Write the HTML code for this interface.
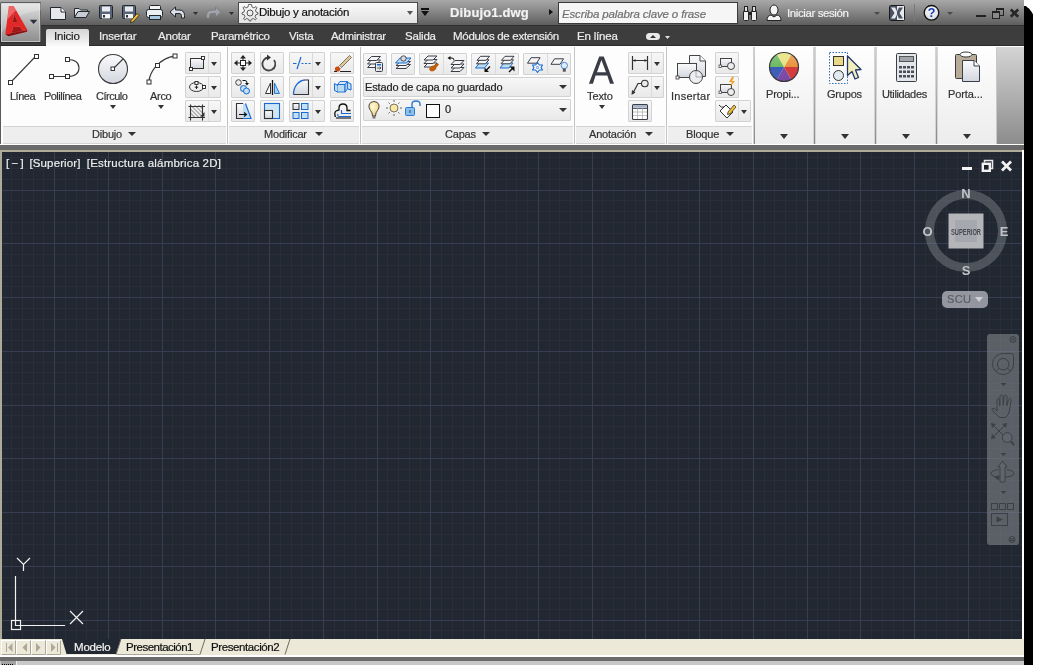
<!DOCTYPE html>
<html><head><meta charset="utf-8">
<style>
html,body{margin:0;padding:0}
body{will-change:transform}
body{width:1039px;height:665px;position:relative;overflow:hidden;background:#fff;font-family:"Liberation Sans",sans-serif;font-size:11px;color:#222}
.a{position:absolute}
.t{position:absolute;white-space:nowrap;line-height:1;-webkit-text-stroke:0.2px currentColor}
.btn{position:absolute;box-sizing:border-box;border:1px solid #d2d2d2;border-radius:1px;background:linear-gradient(#f7f7f7,#e9e9e9)}
.sp{position:absolute;top:0;bottom:0;width:1px;background:#d6d6d6}
.dd{position:absolute;width:0;height:0;border-left:3.5px solid transparent;border-right:3.5px solid transparent;border-top:4px solid #333}
.ptitle{position:absolute;top:126px;height:18px;box-sizing:border-box;border-top:1px solid #d4d4d4;border-bottom:1px solid #d4d4d4;background:#eeeeee}
.ptitle .t{top:2px;font-size:11px;color:#333}
.ptitle .dd{border-left-width:4px;border-right-width:4px;border-top-width:4.5px;top:5px !important}
.vsep{position:absolute;top:47px;height:97px;width:1px;background:#c4c4c4}
.bigp{position:absolute;top:47px;height:97px;box-sizing:border-box;background:linear-gradient(#fefefe,#ececec)}
</style></head><body>

<!-- right shadow -->
<svg class="a" style="left:1024px;top:6px" width="9" height="659"><path d="M0 0 H2 L3.5 1.6 L5 2.6 L6.5 4.4 L8 6.4 L9 8.4 V659 H0 Z" fill="#000"/></svg>

<!-- title bar -->
<div class="a" style="left:0;top:0;width:1024px;height:25px;background:linear-gradient(#a8a8a8,#9a9a9a 20%,#5e5e5e)"></div>
<div class="a" style="left:0;top:25px;width:1024px;height:1px;background:#303030"></div>
<!-- tab bar -->
<div class="a" style="left:0;top:26px;width:1024px;height:20px;background:#3d3d3d"></div>
<div class="a" style="left:0;top:45px;width:1024px;height:1px;background:#2c2c2c"></div>

<!-- app button -->
<svg class="a" style="left:0;top:0" width="44" height="44">
  <defs>
    <linearGradient id="abg" x1="0" y1="0" x2="0" y2="1"><stop offset="0" stop-color="#e2e2e2"/><stop offset=".5" stop-color="#b4b4b4"/><stop offset="1" stop-color="#8e8e8e"/></linearGradient>
    <clipPath id="abclip"><rect x="1" y="3" width="40" height="39"/></clipPath>
    <clipPath id="aclip"><path d="M5.3 34.4 L8.9 6 L13.6 6 L27.4 30.1 L22.8 31.1 L19.8 26.5 L13.2 27.1 L11.5 33 Z M13.9 13.2 L17.5 21.8 L12.9 22.5 Z" clip-rule="evenodd"/></clipPath>
  </defs>
  <rect x="0.5" y="2.5" width="40.5" height="40" fill="#1c1c1c"/>
  <rect x="1.5" y="3.5" width="38.5" height="38" fill="url(#abg)"/>
  <g clip-path="url(#abclip)"><path d="M-2 40 Q10 12 44 10 V-2 H-2 Z" fill="#fff" opacity=".22"/></g>
  <rect x="1.5" y="3.5" width="38.5" height="38" fill="none" stroke="#f4f4f4" stroke-width="1" opacity=".7"/>
  <path d="M13.2 27.1 L19.8 26.5 L22.8 31.1 L11.5 33 Z" fill="#a41818"/>
  <path d="M5.3 34.4 L11.5 33 L22.8 31.1 L27.4 30.1 L27 31.8 L8.6 36.2 Z" fill="#8c1010"/>
  <path id="af" d="M5.3 34.4 L8.9 6 L13.6 6 L27.4 30.1 L22.8 31.1 L19.8 26.5 L13.2 27.1 L11.5 33 Z M13.9 13.2 L17.5 21.8 L12.9 22.5 Z" fill="#e32626" fill-rule="evenodd"/>
  <path d="M13.9 13.2 L17.5 21.8 L12.9 22.5 Z" fill="#9c1414"/>
  <g clip-path="url(#aclip)">
    <path d="M0 0 H26 L0 27 Z" fill="#f7a8a8" opacity=".5"/>
  </g>
  <path d="M29.8 19.8 H37.4 L33.6 24.1 Z" fill="#2a303c"/>
</svg>

<!-- QAT icons -->
<svg class="a" style="left:48px;top:3px" width="190" height="20">
  <!-- new -->
  <path d="M2.5 4.5 H13 L17.5 9 V16.5 H2.5 Z" fill="#e6e8ec" stroke="#222830" stroke-width="1"/>
  <path d="M13 4.5 V9 H17.5" fill="#fff" stroke="#222830"/>
  <!-- open -->
  <path d="M26.5 5.5 H31 L32.5 7 H39.5 V9 H30 L26.5 15 Z" fill="#e4e6ea" stroke="#222830"/>
  <path d="M26.5 14.5 L30 8.5 H41.5 L38 14.5 Z" fill="#c8ccd4" stroke="#222830"/>
  <!-- save -->
  <rect x="51.5" y="2.5" width="13" height="13" rx="1" fill="#5a6478" stroke="#20262e"/>
  <rect x="54" y="3.5" width="8" height="5" fill="#e8eaee"/>
  <rect x="54" y="11" width="8" height="4.5" fill="#f4f4f4"/>
  <rect x="55" y="12" width="2" height="2.5" fill="#333"/>
  <!-- save as -->
  <rect x="74.5" y="2.5" width="13" height="13" rx="1" fill="#5a6478" stroke="#20262e"/>
  <rect x="77" y="3.5" width="8" height="5" fill="#e8eaee"/>
  <rect x="77" y="11" width="8" height="4.5" fill="#f4f4f4"/>
  <rect x="78" y="12" width="2" height="2.5" fill="#333"/>
  <path d="M83 17.5 L89 10.5 L91 12.5 L85 19 L82.5 19.5 Z" fill="#f4c030" stroke="#222" stroke-width=".8"/>
  <!-- print -->
  <rect x="101.5" y="2.5" width="11" height="5" rx="1" fill="#f4f4f4" stroke="#20262e"/>
  <rect x="98.5" y="6.5" width="16" height="8" rx="2" fill="#eceef0" stroke="#20262e"/>
  <rect x="101.5" y="12.5" width="11" height="4" fill="#a8c8e0" stroke="#20262e"/>
  <!-- undo -->
  <path d="M122 9 L127.5 4 V7 H131 Q136.5 7 136.5 12.5 V15 H133.5 V12.5 Q133.5 10.5 131 10.5 H127.5 V14 Z" fill="#dde0e6" stroke="#20262e" stroke-linejoin="round"/>
  <path d="M145 9 L150 9 L147.5 12 Z" fill="#2e2e2e"/>
  <!-- redo -->
  <path d="M173 9 L167.5 4 V7 H164 Q158.5 7 158.5 12.5 V15 H161.5 V12.5 Q161.5 10.5 164 10.5 H167.5 V14 Z" fill="#a0a4aa" stroke="#7a7e84" stroke-linejoin="round"/>
  <path d="M181 9 L186 9 L183.5 12 Z" fill="#2e2e2e"/>
</svg>

<!-- workspace combo -->
<div class="a" style="left:238px;top:2px;width:180px;height:22px;box-sizing:border-box;border:1px solid #4a4a4a;background:linear-gradient(#fafafa,#e2e2e2)"></div>
<svg class="a" style="left:241px;top:4px" width="18" height="18">
  <path d="M9 1.5 L10.5 1.5 L11 4 L13 5 L15 3.5 L16 4.8 L14.5 7 L15 9 L17 9.8 L17 11.2 L14.8 11.8 L14 13.8 L15.5 15.8 L14.3 16.8 L12.3 15.5 L10.3 16.3 L9.8 18 H8.2 L7.7 16.3 L5.7 15.5 L3.7 16.8 L2.5 15.8 L4 13.8 L3.2 11.8 L1 11.2 V9.8 L3 9 L3.5 7 L2 4.8 L3 3.5 L5 5 L7 4 L7.5 1.5 Z" fill="none" stroke="#555" stroke-width=".9" transform="translate(0,-1)"/>
  <circle cx="9" cy="9" r="3" fill="none" stroke="#555"/>
</svg>
<div class="t" style="left:259px;top:7px;font-size:11.5px;color:#111;letter-spacing:-0.25px">Dibujo y anotación</div>
<div class="dd" style="left:407px;top:11px;border-top-color:#555"></div>
<div class="a" style="left:421px;top:8px;width:8px;height:2px;background:#111"></div>
<div class="dd" style="left:421px;top:11px;border-left-width:4px;border-right-width:4px;border-top-width:5px;border-top-color:#111"></div>

<!-- doc title -->
<div class="t" style="left:450px;top:6px;font-size:13px;font-weight:bold;color:#f2f2f2;letter-spacing:0.15px">Dibujo1.dwg</div>
<div class="a" style="left:549px;top:9px;width:0;height:0;border-top:3.5px solid transparent;border-bottom:3.5px solid transparent;border-left:4px solid #111"></div>

<!-- search -->
<div class="a" style="left:558px;top:2px;width:180px;height:22px;box-sizing:border-box;border:1px solid #3a3a3a;background:#f6f6f6"></div>
<div class="t" style="left:562px;top:9px;font-size:11.5px;font-style:italic;color:#707070;letter-spacing:-0.15px">Escriba palabra clave o frase</div>

<!-- binoculars -->
<svg class="a" style="left:742px;top:5px" width="17" height="17">
  <rect x="1.5" y="5.5" width="5" height="10" rx="1" fill="#f0f0f0" stroke="#222"/>
  <rect x="9.5" y="5.5" width="5" height="10" rx="1" fill="#f0f0f0" stroke="#222"/>
  <rect x="2.5" y="1.5" width="3" height="5" fill="#ddd" stroke="#222"/>
  <rect x="10.5" y="1.5" width="3" height="5" fill="#ddd" stroke="#222"/>
  <rect x="6" y="7" width="4" height="3" fill="#222"/>
</svg>
<!-- user -->
<svg class="a" style="left:766px;top:4px" width="17" height="18">
  <ellipse cx="8" cy="6" rx="4" ry="5" fill="#f4f4f4" stroke="#222"/>
  <path d="M1 16.5 Q1 11.5 5 11 L8 13 L11 11 Q15 11.5 15 16.5 Z" fill="#f4f4f4" stroke="#222"/>
</svg>
<div class="t" style="left:787px;top:8px;font-size:11.5px;color:#f0f0f0;letter-spacing:-0.4px">Iniciar sesión</div>
<div class="dd" style="left:874px;top:12px;border-left-width:3px;border-right-width:3px;border-top-width:3.5px;border-top-color:#4a4a4a"></div>
<!-- exchange X -->
<svg class="a" style="left:889px;top:5px" width="17" height="17">
  <defs><clipPath id="xl"><rect x="0" y="0" width="8" height="17"/></clipPath><clipPath id="xr"><rect x="8" y="0" width="9" height="17"/></clipPath></defs>
  <rect x=".5" y=".5" width="15" height="15" rx="1" fill="#e8eaee" stroke="#1a1a1a"/>
  <rect x="1" y="1" width="7" height="14" fill="#4a5262"/>
  <path d="M2 2.5 H6 L8 6.5 L10 2.5 H14 L10.5 8 L14 13.5 H10 L8 9.5 L6 13.5 H2 L5.5 8 Z" fill="#e8eaee" clip-path="url(#xl)"/>
  <path d="M2 2.5 H6 L8 6.5 L10 2.5 H14 L10.5 8 L14 13.5 H10 L8 9.5 L6 13.5 H2 L5.5 8 Z" fill="#4a5262" clip-path="url(#xr)"/>
</svg>
<div class="a" style="left:914px;top:4px;width:1px;height:18px;background:#777"></div>
<!-- help -->
<svg class="a" style="left:923px;top:4px" width="18" height="18">
  <defs><radialGradient id="hg" cx=".5" cy=".35" r=".7"><stop offset="0" stop-color="#fafafa"/><stop offset="1" stop-color="#d8dade"/></radialGradient></defs>
  <circle cx="8.5" cy="8.8" r="7.3" fill="url(#hg)" stroke="#111" stroke-width="1.3"/>
  <text x="8.6" y="13.2" text-anchor="middle" font-family="Liberation Sans" font-weight="bold" font-size="12.5" fill="#1438b0">?</text>
</svg>
<div class="dd" style="left:947px;top:12px;border-left-width:3px;border-right-width:3px;border-top-width:3.5px;border-top-color:#4a4a4a"></div>
<!-- window controls -->
<div class="a" style="left:976px;top:15px;width:10px;height:2px;background:#222"></div>
<svg class="a" style="left:990px;top:6px" width="16" height="14">
  <rect x="6.5" y="2.5" width="7" height="7" fill="none" stroke="#222"/>
  <rect x="6" y="2" width="8" height="2" fill="#222"/>
  <rect x="2.5" y="5.5" width="7" height="7" fill="#8a8a8a" stroke="#222"/>
  <rect x="2" y="5" width="8" height="2" fill="#222"/>
</svg>
<svg class="a" style="left:1009px;top:8px" width="12" height="10">
  <path d="M1.8 1.5 L9.2 8.8 M9.2 1.5 L1.8 8.8" stroke="#262626" stroke-width="2.6"/>
</svg>

<!-- tabs -->
<div class="a" style="left:46px;top:29px;width:43px;height:17px;border-radius:2px 2px 0 0;background:linear-gradient(#d4d4d4,#fafafa)"></div>
<div class="t" style="left:54px;top:31px;font-size:11.5px;color:#222;letter-spacing:-0.2px">Inicio</div>
<div class="t" style="left:99px;top:31px;font-size:11.5px;color:#ececec;letter-spacing:-0.2px">Insertar</div>
<div class="t" style="left:158px;top:31px;font-size:11.5px;color:#ececec;letter-spacing:-0.2px">Anotar</div>
<div class="t" style="left:211px;top:31px;font-size:11.5px;color:#ececec;letter-spacing:-0.3px">Paramétrico</div>
<div class="t" style="left:289px;top:31px;font-size:11.5px;color:#ececec;letter-spacing:-0.2px">Vista</div>
<div class="t" style="left:331px;top:31px;font-size:11.5px;color:#ececec;letter-spacing:-0.3px">Administrar</div>
<div class="t" style="left:405px;top:31px;font-size:11.5px;color:#ececec;letter-spacing:-0.2px">Salida</div>
<div class="t" style="left:453px;top:31px;font-size:11.5px;color:#ececec;letter-spacing:-0.3px">Módulos de extensión</div>
<div class="t" style="left:577px;top:31px;font-size:11.5px;color:#ececec;letter-spacing:-0.2px">En línea</div>
<svg class="a" style="left:645px;top:31px" width="30" height="12">
  <rect x="1" y="2" width="14" height="7" rx="3.5" fill="#e8e8e8"/>
  <path d="M5 7 L8 4 L11 7 Z" fill="#333"/>
  <path d="M20 5 L25 5 L22.5 8 Z" fill="#e0e0e0"/>
</svg>

<!-- RIBBON -->
<div class="a" style="left:0;top:46px;width:1024px;height:99px;background:#fdfdfd"></div>
<div class="a" style="left:0;top:46px;width:1px;height:99px;background:#5a5a5a"></div>
<div class="a" style="left:997px;top:47px;width:27px;height:97px;background:linear-gradient(#d4d4d4,#8c8c8c)"></div>
<div class="a" style="left:0;top:144px;width:1024px;height:1px;background:#fff"></div>
<!-- gray band & tan -->
<div class="a" style="left:0;top:145px;width:1024px;height:5px;background:#6a6a6a"></div>
<div class="a" style="left:0;top:150px;width:1022px;height:2px;background:#b0ac9a"></div>
<div class="a" style="left:1022px;top:150px;width:2px;height:495px;background:#fff"></div>


<!-- panel separators -->
<div class="vsep" style="left:227px"></div>
<div class="vsep" style="left:360px"></div>
<div class="vsep" style="left:574px"></div>
<div class="vsep" style="left:666px"></div>

<!-- panel titles -->
<div class="ptitle" style="left:3px;width:223px"><div class="t" style="left:89px;letter-spacing:-0.2px">Dibujo</div><div class="dd" style="left:125px;top:7px"></div></div>
<div class="ptitle" style="left:229px;width:130px"><div class="t" style="left:35px;letter-spacing:-0.2px">Modificar</div><div class="dd" style="left:86px;top:7px"></div></div>
<div class="ptitle" style="left:362px;width:211px"><div class="t" style="left:83px;letter-spacing:-0.2px">Capas</div><div class="dd" style="left:120px;top:7px"></div></div>
<div class="ptitle" style="left:576px;width:89px"><div class="t" style="left:13px;letter-spacing:-0.2px">Anotación</div><div class="dd" style="left:69px;top:7px"></div></div>
<div class="ptitle" style="left:668px;width:84px"><div class="t" style="left:18px;letter-spacing:-0.2px">Bloque</div><div class="dd" style="left:58px;top:7px"></div></div>

<!-- ===== DIBUJO ===== -->
<svg class="a" style="left:0;top:46px" width="227" height="80">
  <!-- linea -->
  <line x1="10.5" y1="36.5" x2="35.5" y2="10.5" stroke="#3a3a3a" stroke-width="1.1"/>
  <rect x="8.5" y="34.5" width="4" height="4" fill="#fff" stroke="#333"/>
  <rect x="34.5" y="8.5" width="4" height="4" fill="#fff" stroke="#333"/>
  <!-- polilinea -->
  <path d="M51 30.5 H67 Q79 30.5 79 22 Q79 13.5 67 13.5" fill="none" stroke="#3a3a3a" stroke-width="1.1"/>
  <rect x="49.5" y="28.5" width="4" height="4" fill="#fff" stroke="#333"/>
  <rect x="65.5" y="28.5" width="4" height="4" fill="#fff" stroke="#333"/>
  <rect x="65.5" y="11.5" width="4" height="4" fill="#fff" stroke="#333"/>
  <!-- circulo -->
  <defs><linearGradient id="cg" x1="0" y1="0" x2="0" y2="1"><stop offset="0" stop-color="#fbfbfc"/><stop offset="1" stop-color="#d2d6de"/></linearGradient></defs>
  <circle cx="113" cy="23" r="14.5" fill="url(#cg)" stroke="#3a3a3a" stroke-width="1.1"/>
  <line x1="113" y1="23" x2="123" y2="13" stroke="#3a3a3a" stroke-width="1.1"/>
  <rect x="111" y="21" width="3.5" height="3.5" fill="#fff" stroke="#333"/>
  <!-- arco -->
  <path d="M149 36 C149.5 25 160 12 175 10" fill="none" stroke="#3a3a3a" stroke-width="1.3"/>
  <rect x="147" y="34" width="4" height="4" fill="#fff" stroke="#333"/>
  <rect x="155.5" y="17.5" width="4" height="4" fill="#fff" stroke="#333"/>
  <rect x="173" y="8" width="4" height="4" fill="#fff" stroke="#333"/>
</svg>
<div class="t" style="left:10px;top:91px;color:#333;letter-spacing:-0.5px">Línea</div>
<div class="t" style="left:44px;top:91px;color:#333;letter-spacing:-0.55px">Polilínea</div>
<div class="t" style="left:96px;top:91px;color:#333;letter-spacing:-0.5px">Círculo</div>
<div class="t" style="left:150px;top:91px;color:#333;letter-spacing:-0.3px">Arco</div>
<div class="dd" style="left:110px;top:105px"></div>
<div class="dd" style="left:158px;top:105px"></div>

<!-- dibujo small split buttons -->
<div class="btn" style="left:185px;top:52px;width:36px;height:22px"></div>
<div class="a" style="left:208px;top:53px;width:1px;height:20px;background:#dadada"></div>
<div class="btn" style="left:185px;top:76px;width:36px;height:22px"></div>
<div class="a" style="left:208px;top:77px;width:1px;height:20px;background:#dadada"></div>
<div class="btn" style="left:185px;top:100px;width:36px;height:22px"></div>
<div class="a" style="left:208px;top:101px;width:1px;height:20px;background:#dadada"></div>
<div class="dd" style="left:211px;top:62px"></div>
<div class="dd" style="left:211px;top:86px"></div>
<div class="dd" style="left:211px;top:110px"></div>
<svg class="a" style="left:185px;top:52px" width="24" height="70">
  <rect x="5.5" y="6.5" width="13" height="10" fill="url(#cg)" stroke="#333"/>
  <rect x="4.5" y="15.5" width="3" height="3" fill="#fff" stroke="#222" stroke-width=".9"/>
  <rect x="16.5" y="4.5" width="3" height="3" fill="#fff" stroke="#222" stroke-width=".9"/>
  <ellipse cx="11.5" cy="35" rx="7" ry="4.5" fill="none" stroke="#333"/>
  <rect x="10" y="29.5" width="3" height="3" fill="#fff" stroke="#222" stroke-width=".9"/>
  <rect x="17.5" y="33.5" width="3" height="3" fill="#fff" stroke="#222" stroke-width=".9"/>
  <path d="M11.5 33.5 V37 M9.8 35.2 H13.2" stroke="#222" stroke-width="1"/>
  <defs><clipPath id="hc"><rect x="5" y="53" width="13" height="13"/></clipPath></defs>
  <g clip-path="url(#hc)" stroke="#707070" stroke-width=".9">
    <path d="M0.5 52 L18.5 70 M4.5 52 L22.5 70 M8.5 52 L26.5 70 M-3.5 52 L14.5 70 M12.5 52 L30.5 70"/>
  </g>
  <path d="M3.5 54.5 H20 M3.5 65.5 H20 M5.5 52.5 V68.5 M17.5 52.5 V68.5" stroke="#333" stroke-width="1.1"/>
  <path d="M15 64.5 L19.5 60 V64.5 Z" fill="#333"/>
</svg>

<!-- ===== MODIFICAR ===== -->
<div class="btn" style="left:231px;top:52px;width:24px;height:22px"></div>
<div class="btn" style="left:260px;top:52px;width:24px;height:22px"></div>
<div class="btn" style="left:289px;top:52px;width:36px;height:22px"></div>
<div class="btn" style="left:330px;top:52px;width:24px;height:22px"></div>
<div class="btn" style="left:231px;top:76px;width:24px;height:22px"></div>
<div class="btn" style="left:260px;top:76px;width:24px;height:22px"></div>
<div class="btn" style="left:289px;top:76px;width:36px;height:22px"></div>
<div class="btn" style="left:330px;top:76px;width:24px;height:22px"></div>
<div class="btn" style="left:231px;top:100px;width:24px;height:22px"></div>
<div class="btn" style="left:260px;top:100px;width:24px;height:22px"></div>
<div class="btn" style="left:289px;top:100px;width:36px;height:22px"></div>
<div class="btn" style="left:330px;top:100px;width:24px;height:22px"></div>
<div class="a" style="left:312px;top:53px;width:1px;height:20px;background:#dadada"></div>
<div class="a" style="left:312px;top:77px;width:1px;height:20px;background:#dadada"></div>
<div class="a" style="left:312px;top:101px;width:1px;height:20px;background:#dadada"></div>
<div class="dd" style="left:315px;top:62px"></div>
<div class="dd" style="left:315px;top:86px"></div>
<div class="dd" style="left:315px;top:110px"></div>
<svg class="a" style="left:231px;top:52px" width="124" height="70">
  <!-- move -->
  <path d="M12 3 L15 6.5 H9 Z M12 19 L15 15.5 H9 Z M3 11 L6.5 8 V14 Z M21 11 L17.5 8 V14 Z" fill="#222"/>
  <path d="M12 6 V16 M6 11 H18" stroke="#222" stroke-width="1"/>
  <rect x="9.5" y="8.5" width="5" height="5" fill="#fff" stroke="#222"/>
  <!-- rotate -->
  <path d="M37.5 5.5 A6.5 6.5 0 1 0 43 8" fill="none" stroke="#444" stroke-width="1.8"/>
  <path d="M36 2.5 L40 5.5 L36 8.5 Z" fill="#333"/>
  <!-- trim -->
  <path d="M62 11.5 H65.5 M70.5 11.5 H72.5 M74 11.5 H76 M77.5 11.5 H79.5" stroke="#1a6ad0" stroke-width="1.1"/>
  <path d="M66 17 L70 5" stroke="#1a6ad0" stroke-width="1.2"/>
  <!-- erase -->
  <path d="M118.5 3.5 L120.5 5.5 L110.5 15.5 L108.5 13.5 Z" fill="#dcc89c" stroke="#6a5a40" stroke-width=".8"/>
  <path d="M108.5 13.5 L110.5 15.5 L109 17 L107 15 Z" fill="#fff" stroke="#666" stroke-width=".6"/>
  <circle cx="106.5" cy="17" r="2.6" fill="#c84a14"/>
  <path d="M103 19.5 H106 M109 19.5 H120" stroke="#222" stroke-width="1"/>
  <!-- copy -->
  <circle cx="7.5" cy="30.5" r="2.8" fill="#eee" stroke="#333" stroke-width=".9"/>
  <path d="M11.5 28.5 H14 Q16 28.5 16 31" fill="none" stroke="#111" stroke-width="1"/>
  <path d="M14 31 L16 33.5 L18 31 Z" fill="#111"/>
  <rect x="9.5" y="33.5" width="6" height="6" fill="#b8b8b8"/>
  <circle cx="12.5" cy="36.5" r="3" fill="#c4e0f6" stroke="#1a6ad0" stroke-width="1"/>
  <circle cx="15.5" cy="39" r="3" fill="#c4e0f6" stroke="#1a6ad0" stroke-width="1"/>
  <!-- mirror -->
  <path d="M41.5 28 V43" stroke="#111" stroke-width="1.3"/>
  <path d="M39.5 31 L34.5 41.5 H39.5 Z" fill="#fff" stroke="#333"/>
  <path d="M43.5 31 L48.5 41.5 H43.5 Z" fill="#a8d0f0" stroke="#2a7ad0"/>
  <!-- fillet -->
  <path d="M62.5 42.5 A12 14.5 0 0 1 74 28 H77.5 V42.5 Z" fill="url(#cg)"/>
  <path d="M62.5 42.5 A12 14.5 0 0 1 74 28" fill="none" stroke="#1a6ad0" stroke-width="1.3"/>
  <path d="M74 28 H77.5 V42.5 H62.5" fill="none" stroke="#333" stroke-width="1.1"/>
  <!-- 3d array -->
  <path d="M106.5 32.5 L109 29.5 H116.5 L114 32.5 Z" fill="#d4e8f8" stroke="#1a6ad0" stroke-width=".9"/>
  <rect x="106.5" y="32.5" width="7.5" height="7.5" fill="#bcdcf4" stroke="#1a6ad0" stroke-width=".9"/>
  <path d="M114 32.5 L116.5 29.5 V37 L114 40 Z" fill="#a8d0f0" stroke="#1a6ad0" stroke-width=".9"/>
  <path d="M106.5 33.5 L103.5 31.5 V38.5 L106.5 40 M117 30.5 L120 32 V38 L117 37" fill="#c4e0f6" stroke="#1a6ad0" stroke-width="1"/>
  <!-- stretch -->
  <path d="M12 51.5 H5.5 V66.5 H12" fill="url(#cg)" stroke="#333" stroke-width="1.1"/>
  <path d="M12 51.5 H14.5 L20 66.5 H12 Z" fill="#bcdcf4"/>
  <path d="M14.5 51.5 L20 66.5 H12" fill="none" stroke="#1a6ad0" stroke-width="1.1"/>
  <path d="M8 62.5 H15 M13 60.5 L15.5 62.5 L13 64.5" fill="none" stroke="#111" stroke-width="1.1"/>
  <!-- scale -->
  <rect x="33.5" y="51.5" width="15" height="15" fill="#cfe6f6" stroke="#1a6ad0" stroke-width="1.1"/>
  <rect x="33.5" y="58.5" width="8" height="8" fill="url(#cg)" stroke="#333" stroke-width="1.1"/>
  <!-- array -->
  <rect x="62" y="51.5" width="6" height="6" fill="url(#cg)" stroke="#333"/>
  <rect x="70.5" y="51.5" width="6.5" height="6" fill="#c4e0f6" stroke="#1a6ad0"/>
  <rect x="62" y="60.5" width="6" height="6" fill="#c4e0f6" stroke="#1a6ad0"/>
  <rect x="70.5" y="60.5" width="6.5" height="6" fill="#c4e0f6" stroke="#1a6ad0"/>
  <!-- edit polyline -->
  <path d="M104.5 65 Q102.5 60 106 58.5 L108 58 V56 Q108 52 112 52 Q116 52 116 56 V58.5 H119.5" fill="none" stroke="#111" stroke-width="1.3"/>
  <path d="M110.5 58 V61.5 H120 M107 62 Q106 64 108 64.5 H120" fill="none" stroke="#1a6ad0" stroke-width="1.1"/>
  <path d="M105 66 H120" stroke="#111" stroke-width="1.1"/>
</svg>

<!-- ===== CAPAS ===== -->
<div class="btn" style="left:363px;top:53px;width:24px;height:22px"></div>
<div class="btn" style="left:391px;top:53px;width:24px;height:22px"></div>
<div class="btn" style="left:419px;top:53px;width:48px;height:22px"></div>
<div class="btn" style="left:471px;top:53px;width:48px;height:22px"></div>
<div class="btn" style="left:523px;top:53px;width:48px;height:22px"></div>
<div class="a" style="left:443px;top:54px;width:1px;height:20px;background:#dadada"></div>
<div class="a" style="left:495px;top:54px;width:1px;height:20px;background:#dadada"></div>
<div class="a" style="left:547px;top:54px;width:1px;height:20px;background:#dadada"></div>
<div class="btn" style="left:363px;top:77px;width:208px;height:20px"></div>
<div class="t" style="left:365px;top:82px;color:#222;letter-spacing:-0.15px">Estado de capa no guardado</div>
<div class="dd" style="left:559px;top:85px;border-left-width:4px;border-right-width:4px;border-top-width:4.5px"></div>
<div class="btn" style="left:363px;top:99px;width:208px;height:22px"></div>
<div class="dd" style="left:559px;top:108px;border-left-width:4px;border-right-width:4px;border-top-width:4.5px"></div>
<svg class="a" style="left:363px;top:53px" width="210" height="68">
  <!-- layer props -->
  <path d="M4.5 14.5 L8.5 10.5 H17.5 L13.5 14.5 Z" fill="#f4f4f4" stroke="#3a3e48" stroke-width="1" stroke-linejoin="round"/>
  <path d="M4.5 11 L8.5 7 H17.5 L13.5 11 Z" fill="#f4f4f4" stroke="#3a3e48" stroke-width="1" stroke-linejoin="round"/>
  <path d="M4.5 7.5 L8.5 3.5 H17.5 L13.5 7.5 Z" fill="#f4f4f4" stroke="#3a3e48" stroke-width="1" stroke-linejoin="round"/>
  <rect x="12.5" y="9.5" width="7" height="9" rx="1" fill="#e8eaee" stroke="#3a3e48"/>
  <rect x="14" y="11" width="4" height="1.5" fill="#1a6ad0"/>
  <path d="M14 15 H18 M16.5 13.5 L18 15 L16.5 16.5" fill="none" stroke="#3a3e48" stroke-width=".8"/>
    <!-- layer state -->
  <path d="M33 15.5 L37.5 11.5 H47.5 L43 15.5 Z" fill="#f4f4f4" stroke="#3a3e48" stroke-width="1" stroke-linejoin="round"/>
  <path d="M33 12.5 L37.5 8.5 H47.5 L43 12.5 Z" fill="#f4f4f4" stroke="#3a3e48" stroke-width="1" stroke-linejoin="round"/>
  <path d="M32.5 10 L37.0 5 H48.0 L43.5 10 Z" fill="#bcdcf4" stroke="#1a6ad0" stroke-width="1" stroke-linejoin="round"/>
  <circle cx="40.5" cy="5.5" r="2.7" fill="#d8dade" stroke="#3a3e48" stroke-width=".9"/>
    <!-- match -->
  <path d="M61 14 L65 10 H74 L70 14 Z" fill="#f4f4f4" stroke="#3a3e48" stroke-width="1" stroke-linejoin="round"/>
  <path d="M61 10.5 L65 6.5 H74 L70 10.5 Z" fill="#f4f4f4" stroke="#3a3e48" stroke-width="1" stroke-linejoin="round"/>
  <path d="M61 7 L65 3 H74 L70 7 Z" fill="#f4f4f4" stroke="#3a3e48" stroke-width="1" stroke-linejoin="round"/>
  <path d="M66 16 Q68 12 71 12.5 L74.5 10 L76 11.5 L73.5 14.5 Q73 17.5 69 18.5 Q67 18.5 66 16 Z" fill="#c0600e"/>
    <!-- previous -->
  <path d="M88 18.5 L92 14.5 H101 L97 18.5 Z" fill="#f4f4f4" stroke="#3a3e48" stroke-width="1" stroke-linejoin="round"/>
  <path d="M88 15 L92 11 H101 L97 15 Z" fill="#f4f4f4" stroke="#3a3e48" stroke-width="1" stroke-linejoin="round"/>
  <path d="M88 11.5 L92 7.5 H101 L97 11.5 Z" fill="#f4f4f4" stroke="#3a3e48" stroke-width="1" stroke-linejoin="round"/>
  <path d="M86 5 H89 Q91 5 91 7.5" fill="none" stroke="#111" stroke-width="1"/>
  <path d="M84.5 5 L87.5 3 V7 Z" fill="#111"/>
    <!-- isolate -->
  <path d="M112.5 15 L116.5 10 H125.5 L121.5 15 Z" fill="#bcdcf4" stroke="#1a6ad0" stroke-width="1" stroke-linejoin="round"/>
  <path d="M113.5 10.8 L117.0 6.8 H126.0 L122.5 10.8 Z" fill="#f4f4f4" stroke="#3a3e48" stroke-width="1" stroke-linejoin="round"/>
  <path d="M114 7.3 L117.5 3.3 H126.5 L123 7.3 Z" fill="#f4f4f4" stroke="#3a3e48" stroke-width="1" stroke-linejoin="round"/>
  <path d="M127 13.5 L122.5 18" stroke="#111" stroke-width="1.4"/><path d="M121.5 14.5 V19 H126 Z" fill="#111"/>
    <!-- unisolate -->
  <path d="M137 15 L141 10 H150 L146 15 Z" fill="#bcdcf4" stroke="#1a6ad0" stroke-width="1" stroke-linejoin="round"/>
  <path d="M138 10.8 L141.5 6.8 H150.5 L147 10.8 Z" fill="#f4f4f4" stroke="#3a3e48" stroke-width="1" stroke-linejoin="round"/>
  <path d="M138.5 7.3 L142.0 3.3 H151.0 L147.5 7.3 Z" fill="#f4f4f4" stroke="#3a3e48" stroke-width="1" stroke-linejoin="round"/>
  <path d="M146 19 L150.5 14.5" stroke="#111" stroke-width="1.4"/><path d="M151.5 18.5 V13.5 H146.5 Z" fill="#111"/>
    <!-- freeze -->
  <path d="M164.5 10.2 L168.1 4.7 H177.1 L173.5 10.2 Z" fill="#f6f6f6" stroke="#3a3e48" stroke-width="1" stroke-linejoin="round"/>
  <path d="M174.5 9.5 L176.3 12 H179.5 L178 14.5 L179.5 17 H176.3 L174.5 19.5 L172.7 17 H169.5 L171 14.5 L169.5 12 H172.7 Z" fill="#fff" stroke="#1a6ad0" stroke-width="1.1" stroke-linejoin="round"/>
  <circle cx="174.5" cy="14.5" r="1.2" fill="none" stroke="#1a6ad0" stroke-width=".7"/>
    <!-- off -->
  <path d="M188 11.3 L191.6 5.8 H200.6 L197 11.3 Z" fill="#f6f6f6" stroke="#3a3e48" stroke-width="1" stroke-linejoin="round"/>
  <circle cx="201.3" cy="12.5" r="3.2" fill="#dcecfa" stroke="#4a8ad8" stroke-width="1"/>
  <rect x="199.8" y="15.5" width="3" height="3.2" fill="#555"/>
  <!-- layer combo icons -->
  <defs><radialGradient id="bulb" cx=".4" cy=".35" r=".7"><stop offset="0" stop-color="#fffbe0"/><stop offset="1" stop-color="#f0d070"/></radialGradient></defs>
  <path d="M9.5 63 Q9.5 59.5 7.5 57.5 Q5.5 55 6 52 Q7 48.5 11 48.5 Q15 48.5 16 52 Q16.5 55 14.5 57.5 Q12.5 59.5 12.5 63 Z" fill="url(#bulb)" stroke="#333" stroke-width=".9"/>
  <rect x="9.5" y="62.5" width="3" height="3" fill="#777"/>
  <circle cx="31" cy="55" r="4" fill="#fbe8a0" stroke="#555" stroke-width=".8"/>
  <path d="M31 47 V49 M31 61 V63 M23 55 H25 M37 55 H39 M25.5 49.5 L26.8 50.8 M35.2 59.2 L36.5 60.5 M36.5 49.5 L35.2 50.8 M26.8 59.2 L25.5 60.5" stroke="#555" stroke-width=".9"/>
  <rect x="42.5" y="54.5" width="9" height="8" rx="1" fill="#8cc0ec" stroke="#2a7ad0"/>
  <path d="M49 54.5 V51 Q49 48 53 48 Q57 48 57 51 V53" fill="none" stroke="#2a7ad0" stroke-width="1.4"/>
  <rect x="46.5" y="57" width="1" height="3" fill="#1a4a90"/>
  <rect x="63.5" y="51.5" width="13" height="13" fill="#fff" stroke="#111"/>
</svg>
<div class="t" style="left:445px;top:104px;color:#222">0</div>

<!-- ===== ANOTACION ===== -->
<svg class="a" style="left:584px;top:52px" width="36" height="36"><path d="M4.9 31.7 L15.2 4.6 H19.8 L30 31.7 H26 L23.3 23.5 H11.6 L8.9 31.7 Z M17.4 8.1 L22 20.3 H13 Z" fill="#3a3d45" fill-rule="evenodd"/></svg>
<div class="t" style="left:587px;top:91px;color:#333;letter-spacing:-0.1px">Texto</div>
<div class="dd" style="left:599px;top:105px"></div>
<div class="btn" style="left:628px;top:52px;width:36px;height:22px"></div>
<div class="btn" style="left:628px;top:76px;width:36px;height:22px"></div>
<div class="btn" style="left:628px;top:100px;width:24px;height:22px"></div>
<div class="a" style="left:651px;top:53px;width:1px;height:20px;background:#dadada"></div>
<div class="a" style="left:651px;top:77px;width:1px;height:20px;background:#dadada"></div>
<div class="dd" style="left:654px;top:62px"></div>
<div class="dd" style="left:654px;top:86px"></div>
<svg class="a" style="left:628px;top:52px" width="24" height="70">
  <path d="M4.5 4 V18 M19.5 4 V18" stroke="#333" stroke-width="1.2"/>
  <path d="M5 8.5 H19" stroke="#333" stroke-width="1"/>
  <path d="M5 8.5 L7.5 7 V10 Z M19 8.5 L16.5 7 V10 Z" fill="#333"/>
  <circle cx="16.8" cy="31.5" r="3.3" fill="#e8eaee" stroke="#333" stroke-width="1.1"/>
  <path d="M13.5 31.5 H10 L5 41" fill="none" stroke="#333" stroke-width="1.2"/>
  <path d="M3.5 43 L4 38 L7.5 40.5 Z" fill="#333"/>
  <rect x="4.5" y="52.5" width="15" height="15" rx="1" fill="#fff" stroke="#3a3e48" stroke-width="1.1"/>
  <rect x="5" y="53" width="14" height="2.8" fill="#a8b4c8"/>
  <path d="M5 56.5 H19" stroke="#3a3e48" stroke-width=".8"/>
  <path d="M5 60 H19 M5 63.5 H19 M9.5 56.5 V67 M14.5 56.5 V67" stroke="#b8b8b8" stroke-width=".9"/>
</svg>

<!-- ===== BLOQUE ===== -->
<svg class="a" style="left:672px;top:52px" width="40" height="34">
  <path d="M17.5 3.5 H28 L33.5 9 V24.5 H17.5 Z" fill="url(#cg)" stroke="#444"/>
  <path d="M28 3.5 V9 H33.5" fill="#fff" stroke="#444"/>
  <rect x="5.5" y="11.5" width="19" height="14" fill="url(#cg)" stroke="#444"/>
  <circle cx="24" cy="25" r="6.5" fill="#eceef2" stroke="#444"/>
  <path d="M24 19 V25 H30" fill="none" stroke="#999" stroke-width=".8"/>
  <rect x="4" y="24" width="3" height="3" fill="#fff" stroke="#333" stroke-width=".8"/>
</svg>
<div class="t" style="left:671px;top:91px;color:#333;letter-spacing:0.25px">Insertar</div>
<div class="btn" style="left:715px;top:52px;width:24px;height:22px"></div>
<div class="btn" style="left:715px;top:76px;width:24px;height:22px"></div>
<div class="btn" style="left:715px;top:100px;width:36px;height:22px"></div>
<div class="a" style="left:738px;top:101px;width:1px;height:20px;background:#dadada"></div>
<div class="dd" style="left:741px;top:110px"></div>
<svg class="a" style="left:715px;top:52px" width="24" height="70">
  <rect x="5.5" y="6.5" width="11" height="8" fill="url(#cg)" stroke="#444"/>
  <circle cx="16" cy="14" r="3.5" fill="#eee" stroke="#444"/>
  <rect x="4" y="13" width="2.5" height="2.5" fill="#fff" stroke="#333" stroke-width=".7"/>
  <rect x="5.5" y="32.5" width="11" height="8" fill="url(#cg)" stroke="#444"/>
  <circle cx="16" cy="40" r="3.5" fill="#eee" stroke="#444"/>
  <rect x="4" y="39" width="2.5" height="2.5" fill="#fff" stroke="#333" stroke-width=".7"/>
  <path d="M17 25 L14 30 H17 L15 35 L20 29 H17 L19 25 Z" fill="#f0a020"/>
  <path d="M4 53 Q6 56 9 55 L11 53 L18 60 L12 66 L5 59 L9 55" fill="#fff" stroke="#333"/>
  <path d="M13 60 L19 53 L21 55 L15 62 L12.5 62.5 Z" fill="#f4c030" stroke="#222" stroke-width=".7"/>
</svg>

<!-- ===== right big panels ===== -->
<div class="bigp" style="left:755px;width:59px"></div>
<div class="bigp" style="left:816px;width:59px"></div>
<div class="bigp" style="left:877px;width:59px"></div>
<div class="bigp" style="left:938px;width:58px"></div>
<div class="a" style="left:753px;top:47px;width:2px;height:97px;background:#d0d0d0"></div>
<div class="a" style="left:754px;top:47px;width:1px;height:97px;background:linear-gradient(#d0d0d0,#8a8a8a)"></div>
<div class="a" style="left:813px;top:47px;width:3px;height:97px;background:#d4d4d4"></div>
<div class="a" style="left:814px;top:47px;width:1px;height:97px;background:linear-gradient(#d0d0d0,#8a8a8a)"></div>
<div class="a" style="left:874px;top:47px;width:3px;height:97px;background:#d4d4d4"></div>
<div class="a" style="left:875px;top:47px;width:1px;height:97px;background:linear-gradient(#d0d0d0,#8a8a8a)"></div>
<div class="a" style="left:935px;top:47px;width:3px;height:97px;background:#d4d4d4"></div>
<div class="a" style="left:936px;top:47px;width:1px;height:97px;background:linear-gradient(#d0d0d0,#8a8a8a)"></div>
<div class="a" style="left:996px;top:47px;width:1px;height:97px;background:#c8c8c8"></div>
<svg class="a" style="left:766px;top:50px" width="36" height="36">
  <defs><clipPath id="wc"><circle cx="18" cy="17" r="14.5"/></clipPath>
  <linearGradient id="wg" x1="0" y1="0" x2="0" y2="1"><stop offset="0" stop-color="#fff" stop-opacity=".25"/><stop offset=".5" stop-color="#fff" stop-opacity="0"/><stop offset="1" stop-color="#000" stop-opacity=".12"/></linearGradient></defs>
  <g clip-path="url(#wc)"><path d="M18 17 L35.40 17.00 L26.70 1.93 Z" fill="#e8923a"/><path d="M18 17 L26.70 1.93 L9.30 1.93 Z" fill="#e6e27a"/><path d="M18 17 L9.30 1.93 L0.60 17.00 Z" fill="#6ab860"/><path d="M18 17 L0.60 17.00 L9.30 32.07 Z" fill="#3a5cb8"/><path d="M18 17 L9.30 32.07 L26.70 32.07 Z" fill="#7a48a8"/><path d="M18 17 L26.70 32.07 L35.40 17.00 Z" fill="#d43a3a"/><rect x="0" y="0" width="36" height="36" fill="url(#wg)"/></g>
  <circle cx="18" cy="17" r="14.5" fill="none" stroke="#3a3a3a" stroke-width="1.2"/>
</svg>
<div class="t" style="left:766px;top:89px;color:#333;letter-spacing:-0.2px">Propi...</div>
<div class="dd" style="left:780px;top:134px;border-left-width:4.5px;border-right-width:4.5px;border-top-width:5px"></div>

<svg class="a" style="left:827px;top:50px" width="36" height="36">
  <rect x="2.5" y="2.5" width="18" height="31" fill="none" stroke="#2a6ab8" stroke-dasharray="1.5 1.5"/>
  <rect x="6.5" y="6.5" width="10" height="9" fill="#e8d888" stroke="#333"/>
  <circle cx="11.5" cy="25.5" r="5" fill="#e0eaf0" stroke="#333"/>
  <path d="M20.5 6 L34 19.5 L28.5 20 L31.5 27.5 L28 29 L25 21.5 L20.5 25.5 Z" fill="#f2eebc" stroke="#22386a" stroke-width="1.3" stroke-linejoin="round"/>
</svg>
<div class="t" style="left:827px;top:89px;color:#333;letter-spacing:-0.2px">Grupos</div>
<div class="dd" style="left:841px;top:134px;border-left-width:4.5px;border-right-width:4.5px;border-top-width:5px"></div>

<svg class="a" style="left:895px;top:52px" width="24" height="32">
  <rect x="1.5" y="1.5" width="20" height="28" rx="1" fill="#e4e6ea" stroke="#3a3e48"/>
  <rect x="4.5" y="4.5" width="14" height="5" fill="#a0a4ac" stroke="#555"/>
  <g fill="#4a4e58">
    <rect x="4" y="14" width="3" height="2.5"/><rect x="8" y="14" width="3" height="2.5"/><rect x="12" y="14" width="3" height="2.5"/><rect x="16" y="14" width="3" height="2.5"/>
    <rect x="4" y="18.5" width="3" height="2.5"/><rect x="8" y="18.5" width="3" height="2.5"/><rect x="12" y="18.5" width="3" height="2.5"/><rect x="16" y="18.5" width="3" height="2.5"/>
    <rect x="4" y="23" width="3" height="2.5"/><rect x="8" y="23" width="3" height="2.5"/><rect x="12" y="23" width="3" height="2.5"/><rect x="16" y="23" width="3" height="2.5"/>
  </g>
</svg>
<div class="t" style="left:882px;top:89px;color:#333;letter-spacing:-0.35px">Utilidades</div>
<div class="dd" style="left:902px;top:134px;border-left-width:4.5px;border-right-width:4.5px;border-top-width:5px"></div>

<svg class="a" style="left:953px;top:50px" width="30" height="34">
  <rect x="2.5" y="4.5" width="21" height="24" rx="1" fill="#b8ac98" stroke="#3a3a3a"/>
  <ellipse cx="13" cy="4.5" rx="6" ry="2.5" fill="#fff" stroke="#3a3a3a"/>
  <path d="M9.5 10.5 H21 L26.5 16 V31.5 H9.5 Z" fill="url(#cg)" stroke="#3a3e48"/>
  <path d="M21 10.5 V16 H26.5" fill="#fff" stroke="#3a3e48"/>
</svg>
<div class="t" style="left:948px;top:89px;color:#333;letter-spacing:-0.1px">Porta...</div>
<div class="dd" style="left:963px;top:134px;border-left-width:4.5px;border-right-width:4.5px;border-top-width:5px"></div>


<!-- DRAWING AREA -->
<div class="a" style="left:0;top:152px;width:2px;height:503px;background:#adaa98"></div>
<div class="a" style="left:2px;top:152px;width:1020px;height:487px;background:#222831"></div>
<svg class="a" style="left:2px;top:152px" width="1020" height="487" shape-rendering="crispEdges"><rect x="9" y="0" width="1" height="487" fill="#292e3a"/><rect x="20" y="0" width="1" height="487" fill="#292e3a"/><rect x="31" y="0" width="1" height="487" fill="#292e3a"/><rect x="41" y="0" width="1" height="487" fill="#292e3a"/><rect x="63" y="0" width="1" height="487" fill="#292e3a"/><rect x="74" y="0" width="1" height="487" fill="#292e3a"/><rect x="84" y="0" width="1" height="487" fill="#292e3a"/><rect x="95" y="0" width="1" height="487" fill="#292e3a"/><rect x="117" y="0" width="1" height="487" fill="#292e3a"/><rect x="127" y="0" width="1" height="487" fill="#292e3a"/><rect x="138" y="0" width="1" height="487" fill="#292e3a"/><rect x="149" y="0" width="1" height="487" fill="#292e3a"/><rect x="170" y="0" width="1" height="487" fill="#292e3a"/><rect x="181" y="0" width="1" height="487" fill="#292e3a"/><rect x="192" y="0" width="1" height="487" fill="#292e3a"/><rect x="203" y="0" width="1" height="487" fill="#292e3a"/><rect x="224" y="0" width="1" height="487" fill="#292e3a"/><rect x="235" y="0" width="1" height="487" fill="#292e3a"/><rect x="246" y="0" width="1" height="487" fill="#292e3a"/><rect x="256" y="0" width="1" height="487" fill="#292e3a"/><rect x="278" y="0" width="1" height="487" fill="#292e3a"/><rect x="289" y="0" width="1" height="487" fill="#292e3a"/><rect x="299" y="0" width="1" height="487" fill="#292e3a"/><rect x="310" y="0" width="1" height="487" fill="#292e3a"/><rect x="332" y="0" width="1" height="487" fill="#292e3a"/><rect x="342" y="0" width="1" height="487" fill="#292e3a"/><rect x="353" y="0" width="1" height="487" fill="#292e3a"/><rect x="364" y="0" width="1" height="487" fill="#292e3a"/><rect x="385" y="0" width="1" height="487" fill="#292e3a"/><rect x="396" y="0" width="1" height="487" fill="#292e3a"/><rect x="407" y="0" width="1" height="487" fill="#292e3a"/><rect x="418" y="0" width="1" height="487" fill="#292e3a"/><rect x="439" y="0" width="1" height="487" fill="#292e3a"/><rect x="450" y="0" width="1" height="487" fill="#292e3a"/><rect x="461" y="0" width="1" height="487" fill="#292e3a"/><rect x="471" y="0" width="1" height="487" fill="#292e3a"/><rect x="493" y="0" width="1" height="487" fill="#292e3a"/><rect x="504" y="0" width="1" height="487" fill="#292e3a"/><rect x="514" y="0" width="1" height="487" fill="#292e3a"/><rect x="525" y="0" width="1" height="487" fill="#292e3a"/><rect x="547" y="0" width="1" height="487" fill="#292e3a"/><rect x="557" y="0" width="1" height="487" fill="#292e3a"/><rect x="568" y="0" width="1" height="487" fill="#292e3a"/><rect x="579" y="0" width="1" height="487" fill="#292e3a"/><rect x="600" y="0" width="1" height="487" fill="#292e3a"/><rect x="611" y="0" width="1" height="487" fill="#292e3a"/><rect x="622" y="0" width="1" height="487" fill="#292e3a"/><rect x="633" y="0" width="1" height="487" fill="#292e3a"/><rect x="654" y="0" width="1" height="487" fill="#292e3a"/><rect x="665" y="0" width="1" height="487" fill="#292e3a"/><rect x="676" y="0" width="1" height="487" fill="#292e3a"/><rect x="686" y="0" width="1" height="487" fill="#292e3a"/><rect x="708" y="0" width="1" height="487" fill="#292e3a"/><rect x="719" y="0" width="1" height="487" fill="#292e3a"/><rect x="729" y="0" width="1" height="487" fill="#292e3a"/><rect x="740" y="0" width="1" height="487" fill="#292e3a"/><rect x="762" y="0" width="1" height="487" fill="#292e3a"/><rect x="772" y="0" width="1" height="487" fill="#292e3a"/><rect x="783" y="0" width="1" height="487" fill="#292e3a"/><rect x="794" y="0" width="1" height="487" fill="#292e3a"/><rect x="815" y="0" width="1" height="487" fill="#292e3a"/><rect x="826" y="0" width="1" height="487" fill="#292e3a"/><rect x="837" y="0" width="1" height="487" fill="#292e3a"/><rect x="848" y="0" width="1" height="487" fill="#292e3a"/><rect x="869" y="0" width="1" height="487" fill="#292e3a"/><rect x="880" y="0" width="1" height="487" fill="#292e3a"/><rect x="891" y="0" width="1" height="487" fill="#292e3a"/><rect x="901" y="0" width="1" height="487" fill="#292e3a"/><rect x="923" y="0" width="1" height="487" fill="#292e3a"/><rect x="934" y="0" width="1" height="487" fill="#292e3a"/><rect x="944" y="0" width="1" height="487" fill="#292e3a"/><rect x="955" y="0" width="1" height="487" fill="#292e3a"/><rect x="977" y="0" width="1" height="487" fill="#292e3a"/><rect x="987" y="0" width="1" height="487" fill="#292e3a"/><rect x="998" y="0" width="1" height="487" fill="#292e3a"/><rect x="1009" y="0" width="1" height="487" fill="#292e3a"/><rect x="0" y="5" width="1020" height="1" fill="#292e3a"/><rect x="0" y="16" width="1020" height="1" fill="#292e3a"/><rect x="0" y="27" width="1020" height="1" fill="#292e3a"/><rect x="0" y="48" width="1020" height="1" fill="#292e3a"/><rect x="0" y="59" width="1020" height="1" fill="#292e3a"/><rect x="0" y="70" width="1020" height="1" fill="#292e3a"/><rect x="0" y="81" width="1020" height="1" fill="#292e3a"/><rect x="0" y="102" width="1020" height="1" fill="#292e3a"/><rect x="0" y="113" width="1020" height="1" fill="#292e3a"/><rect x="0" y="124" width="1020" height="1" fill="#292e3a"/><rect x="0" y="134" width="1020" height="1" fill="#292e3a"/><rect x="0" y="156" width="1020" height="1" fill="#292e3a"/><rect x="0" y="167" width="1020" height="1" fill="#292e3a"/><rect x="0" y="177" width="1020" height="1" fill="#292e3a"/><rect x="0" y="188" width="1020" height="1" fill="#292e3a"/><rect x="0" y="210" width="1020" height="1" fill="#292e3a"/><rect x="0" y="220" width="1020" height="1" fill="#292e3a"/><rect x="0" y="231" width="1020" height="1" fill="#292e3a"/><rect x="0" y="242" width="1020" height="1" fill="#292e3a"/><rect x="0" y="263" width="1020" height="1" fill="#292e3a"/><rect x="0" y="274" width="1020" height="1" fill="#292e3a"/><rect x="0" y="285" width="1020" height="1" fill="#292e3a"/><rect x="0" y="296" width="1020" height="1" fill="#292e3a"/><rect x="0" y="317" width="1020" height="1" fill="#292e3a"/><rect x="0" y="328" width="1020" height="1" fill="#292e3a"/><rect x="0" y="339" width="1020" height="1" fill="#292e3a"/><rect x="0" y="349" width="1020" height="1" fill="#292e3a"/><rect x="0" y="371" width="1020" height="1" fill="#292e3a"/><rect x="0" y="382" width="1020" height="1" fill="#292e3a"/><rect x="0" y="392" width="1020" height="1" fill="#292e3a"/><rect x="0" y="403" width="1020" height="1" fill="#292e3a"/><rect x="0" y="425" width="1020" height="1" fill="#292e3a"/><rect x="0" y="435" width="1020" height="1" fill="#292e3a"/><rect x="0" y="446" width="1020" height="1" fill="#292e3a"/><rect x="0" y="457" width="1020" height="1" fill="#292e3a"/><rect x="0" y="478" width="1020" height="1" fill="#292e3a"/><rect x="52" y="0" width="1" height="487" fill="#383d52"/><rect x="106" y="0" width="1" height="487" fill="#383d52"/><rect x="160" y="0" width="1" height="487" fill="#383d52"/><rect x="213" y="0" width="1" height="487" fill="#383d52"/><rect x="267" y="0" width="1" height="487" fill="#383d52"/><rect x="321" y="0" width="1" height="487" fill="#383d52"/><rect x="375" y="0" width="1" height="487" fill="#383d52"/><rect x="428" y="0" width="1" height="487" fill="#383d52"/><rect x="482" y="0" width="1" height="487" fill="#383d52"/><rect x="536" y="0" width="1" height="487" fill="#383d52"/><rect x="590" y="0" width="1" height="487" fill="#383d52"/><rect x="643" y="0" width="1" height="487" fill="#383d52"/><rect x="697" y="0" width="1" height="487" fill="#383d52"/><rect x="751" y="0" width="1" height="487" fill="#383d52"/><rect x="805" y="0" width="1" height="487" fill="#383d52"/><rect x="858" y="0" width="1" height="487" fill="#383d52"/><rect x="912" y="0" width="1" height="487" fill="#383d52"/><rect x="966" y="0" width="1" height="487" fill="#383d52"/><rect x="0" y="38" width="1020" height="1" fill="#383d52"/><rect x="0" y="91" width="1020" height="1" fill="#383d52"/><rect x="0" y="145" width="1020" height="1" fill="#383d52"/><rect x="0" y="199" width="1020" height="1" fill="#383d52"/><rect x="0" y="253" width="1020" height="1" fill="#383d52"/><rect x="0" y="306" width="1020" height="1" fill="#383d52"/><rect x="0" y="360" width="1020" height="1" fill="#383d52"/><rect x="0" y="414" width="1020" height="1" fill="#383d52"/><rect x="0" y="468" width="1020" height="1" fill="#383d52"/></svg>

<!-- layout tabs -->
<div class="a" style="left:0;top:639px;width:1024px;height:17px;background:#ece9d8"></div>
<div class="a" style="left:0;top:655px;width:1024px;height:2px;background:#fff"></div>
<div class="a" style="left:0;top:657px;width:1024px;height:4px;background:#6b6b6b"></div>
<div class="a" style="left:0;top:661px;width:1024px;height:4px;background:#c8c8c8"></div>
<div class="a" style="left:1px;top:661px;width:15px;height:4px;background:#a2a2a2"></div>
<div class="a" style="left:16px;top:661px;width:1px;height:4px;background:#eee"></div>
<div class="a" style="left:2px;top:664px;width:12px;height:1px;background:repeating-linear-gradient(90deg,#000 0 1px,transparent 1px 2px)"></div>



<!-- viewport label -->
<div class="t" style="left:6px;top:158px;font-size:11.5px;color:#ececec">[</div>
<div class="t" style="left:11.5px;top:158px;font-size:11.5px;color:#ececec">−</div>
<div class="t" style="left:20.5px;top:158px;font-size:11.5px;color:#ececec">]</div>
<div class="t" style="left:29.5px;top:158px;font-size:11.5px;color:#ececec;letter-spacing:0.12px">[Superior]</div>
<div class="t" style="left:86.8px;top:158px;font-size:11.5px;color:#ececec;letter-spacing:0.18px">[Estructura alámbrica 2D]</div>

<!-- viewport window controls -->
<div class="a" style="left:962px;top:167px;width:10px;height:3px;background:#f4f4f4"></div>
<svg class="a" style="left:980px;top:159px" width="14" height="14">
  <path d="M4.5 3.5 V1.5 H12.5 V9.5 H10.5" fill="none" stroke="#e8e8e8" stroke-width="1.6"/>
  <rect x="2.8" y="4.8" width="7" height="7" fill="#1c2028" stroke="#f2f2f2" stroke-width="2.4"/>
</svg>
<svg class="a" style="left:1000px;top:160px" width="13" height="12">
  <path d="M2 1.5 L11 10.5 M11 1.5 L2 10.5" stroke="#f2f2f2" stroke-width="2.8"/>
</svg>

<!-- viewcube -->
<svg class="a" style="left:915px;top:180px" width="100" height="100">
  <circle cx="51" cy="51" r="36.5" fill="none" stroke="#8a8e96" stroke-opacity=".42" stroke-width="9"/>
  <rect x="33.5" y="33.5" width="35" height="35" fill="#b4b5b9"/>
  <rect x="40" y="40" width="22" height="22" fill="#a5a8ae"/>
  <text x="0" y="0" font-family="Liberation Sans" font-weight="bold" font-size="9.5" fill="#464a52" textLength="50" lengthAdjust="spacingAndGlyphs" transform="translate(36 54.8) scale(0.6 1)">SUPERIOR</text>
  <g font-family="Liberation Sans" font-weight="bold" font-size="13" fill="#c2c3c6" text-anchor="middle">
    <text x="51" y="17.8">N</text>
    <text x="51" y="94.5">S</text>
    <text x="12.5" y="55.8">O</text>
    <text x="89" y="55.8">E</text>
  </g>
</svg>
<!-- SCU -->
<div class="a" style="left:942px;top:291px;width:46px;height:17px;border-radius:5px;background:rgba(176,178,188,0.8)"></div>
<div class="t" style="left:947px;top:294px;font-size:11px;color:#5a5d65;letter-spacing:0.3px">SCU</div>
<div class="dd" style="left:975px;top:297px;border-left-width:4px;border-right-width:4px;border-top-width:5px;border-top-color:#cfd1d6"></div>

<!-- navbar -->
<div class="a" style="left:987px;top:334px;width:32px;height:211px;border-radius:3px;background:rgba(122,126,132,0.66)"></div>
<svg class="a" style="left:987px;top:334px" width="32" height="211">
  <g fill="none" stroke="#3c4046" stroke-width="1">
    <circle cx="26" cy="5.5" r="3"/>
    <path d="M24.5 4 L27.5 7 M27.5 4 L24.5 7"/>
    <path d="M16.5 19.5 H24.5 Q26.5 19.5 26.5 21.5 V30 A10.5 10.5 0 1 1 16.5 19.5 Z"/>
    <circle cx="16.2" cy="30.2" r="5.8"/>
    <path d="M12.1 34.3 L9.1 37.4 M20.3 34.3 L23.9 37.4"/>
    <path d="M9 80 Q6 78 4.8 75.5 Q5 74 7 74.5 L10 77 L10 66 Q10 64.5 11.3 64.5 Q12.6 64.5 12.6 66 L12.8 72 L13 62.5 Q13 61 14.6 61 Q16.2 61 16.2 62.5 L16.2 71.5 L17 62.5 Q17.2 61.3 18.6 61.3 Q20 61.3 20 62.8 L19.8 72 L21.5 65.5 Q22 64.2 23.3 64.5 Q24.5 65 24.2 66.5 L22.5 76 Q21.5 82 18 83.5 L13 83.5 Q11 82.5 9 80 Z"/>
    <path d="M4.5 89.5 L19.5 104.5 M19.5 89.5 L4.5 104.5"/>
    <circle cx="20.2" cy="103.5" r="4.8" fill="#60646d"/>
    <path d="M24 107.5 L27 111" stroke-width="2"/>
    <path d="M11.5 135.5 Q4 136.5 4 139.5 Q4 143 15.5 143.3 Q26.7 143 26.7 139.5 Q26.7 136.5 20 135.5"/>
    <path d="M13 148 V133 H11 L15.5 127 L20 133 H18 V148 Z" fill="#60646d"/>
    <rect x="4.5" y="169.5" width="6" height="6"/>
    <rect x="12.5" y="169.5" width="6" height="6"/>
    <rect x="20.5" y="169.5" width="6" height="6"/>
    <rect x="4.5" y="179.5" width="16" height="12"/>
    <circle cx="25" cy="205.5" r="3"/>
    <path d="M23 205 H27 M23 206.5 H27"/>
  </g>
  <path d="M4 89 L9 90 L5 94 Z M20 89 L15 90 L19 94 Z M4 105 L5 100 L9 104 Z" fill="#3c4046"/>
  <path d="M12 141 L7.5 143.5 L12 146.5 Z" fill="#3c4046"/>
  <path d="M9.5 182.5 L16 185.5 L9.5 188.5 Z" fill="#3c4046"/>
  <path d="M13.5 49 L19.5 49 L16.5 52 Z" fill="#3c4046"/>
  <path d="M13.5 119 L19.5 119 L16.5 122 Z" fill="#3c4046"/>
  <path d="M13.5 157 L19.5 157 L16.5 160 Z" fill="#3c4046"/>
  <path d="M3 56.5 H29" stroke="#6e6a62" stroke-width="1" opacity=".35"/>
</svg>

<!-- UCS icon -->
<svg class="a" style="left:0;top:550px" width="90" height="85" shape-rendering="auto">
  <g stroke="#f2f2f2" stroke-width="1.2" fill="none">
    <path d="M17 8 L23.5 14.5 L30 8 M23.5 14.5 V21"/>
    <path d="M15.5 26 V75.5 H65"/>
    <rect x="11.5" y="70.5" width="9" height="9"/>
    <path d="M70 61 L83 74 M83 61 L70 74"/>
  </g>
</svg>

<!-- layout tab nav buttons -->
<svg class="a" style="left:0;top:639px" width="300" height="18">
  <g fill="#ece9d8" stroke="#fff">
    <rect x="1.5" y="1.5" width="14" height="14"/>
    <rect x="16.5" y="1.5" width="14" height="14"/>
    <rect x="31.5" y="1.5" width="14" height="14"/>
    <rect x="46.5" y="1.5" width="14" height="14"/>
  </g>
  <g fill="none" stroke="#aca899">
    <path d="M15.5 1.5 V15.5 H1.5 M30.5 1.5 V15.5 H16.5 M45.5 1.5 V15.5 H31.5 M60.5 1.5 V15.5 H46.5"/>
  </g>
  <g fill="#aca899">
    <rect x="6" y="4" width="1" height="9"/><path d="M12.5 4 V13 L8 8.5 Z"/>
    <path d="M27 4 V13 L22.5 8.5 Z"/>
    <path d="M36 4 V13 L40.5 8.5 Z"/>
    <path d="M51 4 V13 L55.5 8.5 Z"/><rect x="57" y="4" width="1" height="9"/>
  </g>
  <!-- Modelo tab dark -->
  <path d="M62 0 L66.5 15 H116 L121 0 Z" fill="#222831"/>
  <path d="M121 0 L116 15.5 M205 0 L200 15.5 M290 0 L285 15.5" stroke="#6e6c60" stroke-width="1"/>
  <path d="M117 15.5 H200" stroke="#aca899"/>
</svg>
<div class="t" style="left:74px;top:642px;font-size:11.5px;color:#f2f2f2;letter-spacing:-0.2px">Modelo</div>
<div class="t" style="left:126px;top:642px;font-size:11.5px;color:#111;letter-spacing:-0.5px">Presentación1</div>
<div class="t" style="left:211px;top:642px;font-size:11.5px;color:#111;letter-spacing:-0.4px">Presentación2</div>


</body></html>
